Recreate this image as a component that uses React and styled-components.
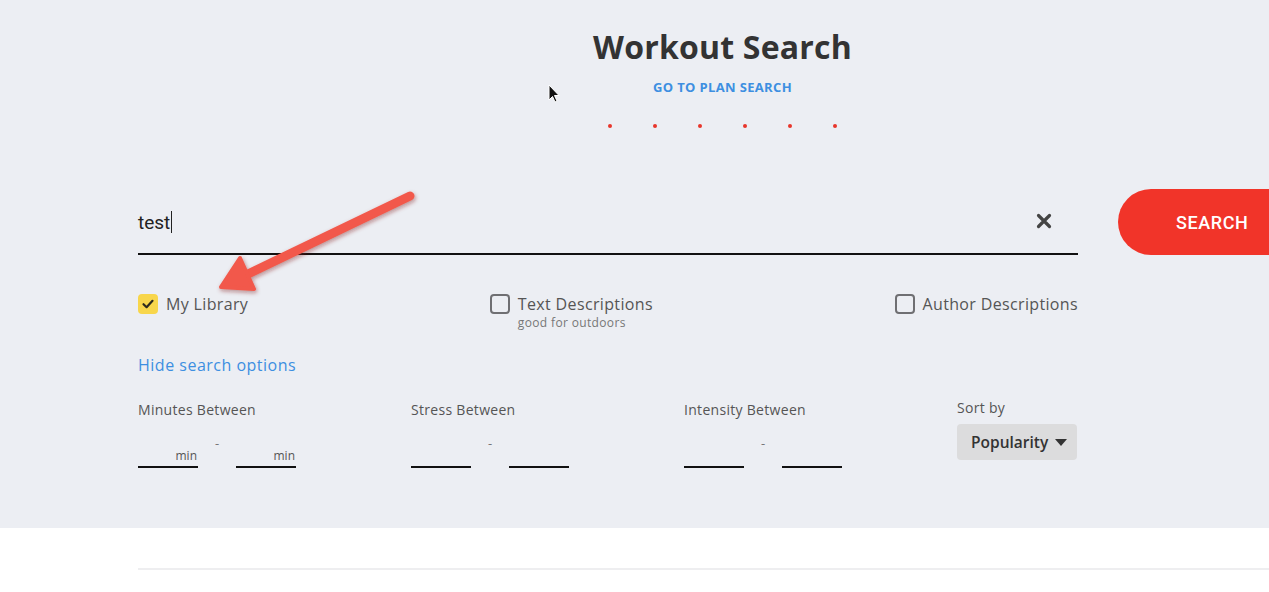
import React from 'react'
import styled, { createGlobalStyle } from 'styled-components'

const GlobalStyle = createGlobalStyle`
  html, body {
    margin: 0;
    padding: 0;
    background: #fff;
    overflow: hidden;
  }
  body {
    font-family: 'Open Sans', 'Noto Sans', sans-serif;
    color: #333;
  }
`

const Page = styled.div`
  position: relative;
  width: 1269px;
  height: 592px;
  overflow: hidden;
`

const Panel = styled.section`
  background: #eceef3;
  height: 528px;
  padding-top: 27px;
  box-sizing: border-box;
`

const Container = styled.div`
  margin-left: 138px;
  width: 1169px;
`

const Header = styled.header`
  display: flex;
  flex-direction: column;
  align-items: center;
`

const Title = styled.h1`
  margin: 0;
  font-size: 32px;
  line-height: 40px;
  font-weight: 700;
  color: #333;
  letter-spacing: 0.2px;
`

const PlanLink = styled.a`
  margin-top: 11px;
  font-size: 13px;
  line-height: 18px;
  font-weight: 700;
  color: #3d8fe1;
  letter-spacing: 0.35px;
  text-transform: uppercase;
  text-decoration: none;
`

const Dots = styled.div`
  display: flex;
  gap: 41px;
  margin-top: 28px;
  height: 4px;
`

const Dot = styled.span`
  width: 4px;
  height: 4px;
  border-radius: 50%;
  background: #e8352b;
`

const SearchRow = styled.div`
  display: flex;
  margin-top: 61px;
  height: 66px;
`

const InputWrap = styled.div`
  width: 940px;
  display: flex;
  align-items: center;
  border-bottom: 2px solid #111;
  box-sizing: border-box;
`

const QueryText = styled.span`
  flex: 1;
  font-family: Roboto, 'Liberation Sans', sans-serif;
  font-size: 19px;
  color: #222;
  display: flex;
  align-items: center;
  padding-top: 2px;
`

const Caret = styled.span`
  display: inline-block;
  width: 1px;
  height: 22px;
  background: #222;
  margin-left: 1px;
`

const ClearButton = styled.button`
  border: 0;
  background: none;
  padding: 0;
  margin-right: 26px;
  display: flex;
  cursor: pointer;
`

const SearchButton = styled.button`
  margin-left: 40px;
  width: 189px;
  border: 0;
  border-radius: 33px;
  background: #f13429;
  color: #fff;
  font-family: Roboto, 'Liberation Sans', sans-serif;
  font-size: 18px;
  font-weight: 500;
  text-align: left;
  padding-left: 58px;
  letter-spacing: 0.6px;
`

const OptionsRow = styled.div`
  width: 940px;
  display: flex;
  justify-content: space-between;
  margin-top: 39px;
`

const Option = styled.label`
  display: flex;
  align-items: flex-start;
  gap: 8px;
`

const Box = styled.span`
  width: 20px;
  height: 20px;
  box-sizing: border-box;
  border-radius: 4px;
  border: ${p => (p.checked ? '0' : '2px solid #6f6f72')};
  background: ${p => (p.checked ? '#f8d64b' : 'transparent')};
  display: flex;
  align-items: center;
  justify-content: center;
`

const OptionText = styled.span`
  display: flex;
  flex-direction: column;
`

const OptionLabel = styled.span`
  font-size: 16px;
  line-height: 20px;
  letter-spacing: 0.35px;
  color: #555;
`

const OptionHint = styled.span`
  font-size: 12px;
  line-height: 18px;
  letter-spacing: 0.35px;
  color: #777;
`

const HideLink = styled.a`
  display: block;
  margin-top: 22px;
  font-size: 16px;
  line-height: 22px;
  letter-spacing: 0.5px;
  color: #3d8fe1;
  text-decoration: none;
`

const Filters = styled.div`
  display: grid;
  grid-template-columns: 273px 273px 273px 120px;
  margin-top: 24px;
`

const Filter = styled.div`
  display: flex;
  flex-direction: column;
  margin-top: ${p => (p.raised ? '-2px' : '0')};
`

const FilterLabel = styled.span`
  font-size: 14px;
  line-height: 20px;
  letter-spacing: 0.3px;
  color: #555;
`

const Range = styled.div`
  display: flex;
  align-items: center;
  height: 48px;
`

const NumberField = styled.div`
  width: 60px;
  height: 48px;
  box-sizing: border-box;
  border-bottom: 2px solid #111;
  display: flex;
  align-items: flex-end;
  justify-content: flex-end;
  padding: 0 1px 3px 0;
  font-size: 12px;
  line-height: 14px;
  color: #555;
`

const Dash = styled.span`
  width: 38px;
  text-align: center;
  font-size: 13px;
  color: #777;
  margin-top: -2px;
`

const Select = styled.div`
  margin-top: 6px;
  height: 36px;
  width: 120px;
  box-sizing: border-box;
  border-radius: 4px;
  background: #dcdcdd;
  display: flex;
  align-items: center;
  padding-left: 14px;
  gap: 7px;
  font-size: 15.5px;
  font-weight: 600;
  color: #333;
`

const Divider = styled.hr`
  margin: 40px 0 0 138px;
  border: 0;
  height: 2px;
  background: #eeeef0;
`

const Overlay = styled.svg`
  position: absolute;
  top: 0;
  left: 0;
  pointer-events: none;
`

const Check = () => (
  <svg width="14" height="14" viewBox="0 0 14 14">
    <path d="M2.5 7.2 L5.6 10.2 L11.5 3.8" fill="none" stroke="#2d2a1e" strokeWidth="2.2" strokeLinecap="round" strokeLinejoin="round" />
  </svg>
)

const ClearIcon = () => (
  <svg width="16" height="16" viewBox="0 0 16 16">
    <path d="M2.5 2.5 L13.5 13.5 M13.5 2.5 L2.5 13.5" stroke="#444" strokeWidth="3.2" strokeLinecap="round" />
  </svg>
)

const CaretDown = () => (
  <svg width="12" height="7" viewBox="0 0 12 7">
    <path d="M0 0 H12 L6 7 Z" fill="#333" />
  </svg>
)

const ranges = [
  { label: 'Minutes Between', suffix: 'min' },
  { label: 'Stress Between', suffix: '' },
  { label: 'Intensity Between', suffix: '' },
]

export default function App() {
  return (
    <Page>
      <GlobalStyle />
      <Panel>
        <Container>
          <Header>
            <Title>Workout Search</Title>
            <PlanLink href="#">Go to plan search</PlanLink>
            <Dots>
              {[0, 1, 2, 3, 4, 5].map(i => <Dot key={i} />)}
            </Dots>
          </Header>

          <SearchRow>
            <InputWrap>
              <QueryText>
                test<Caret />
              </QueryText>
              <ClearButton aria-label="clear">
                <ClearIcon />
              </ClearButton>
            </InputWrap>
            <SearchButton>SEARCH</SearchButton>
          </SearchRow>

          <OptionsRow>
            <Option>
              <Box checked>
                <Check />
              </Box>
              <OptionText>
                <OptionLabel>My Library</OptionLabel>
              </OptionText>
            </Option>
            <Option>
              <Box />
              <OptionText>
                <OptionLabel>Text Descriptions</OptionLabel>
                <OptionHint>good for outdoors</OptionHint>
              </OptionText>
            </Option>
            <Option>
              <Box />
              <OptionText>
                <OptionLabel>Author Descriptions</OptionLabel>
              </OptionText>
            </Option>
          </OptionsRow>

          <HideLink href="#">Hide search options</HideLink>

          <Filters>
            {ranges.map(r => (
              <Filter key={r.label}>
                <FilterLabel>{r.label}</FilterLabel>
                <Range>
                  <NumberField>{r.suffix}</NumberField>
                  <Dash>-</Dash>
                  <NumberField>{r.suffix}</NumberField>
                </Range>
              </Filter>
            ))}
            <Filter raised>
              <FilterLabel>Sort by</FilterLabel>
              <Select>
                Popularity
                <CaretDown />
              </Select>
            </Filter>
          </Filters>
        </Container>
      </Panel>
      <Divider />

      <Overlay width="1269" height="592">
        <defs>
          <filter id="shadow" x="-20%" y="-20%" width="140%" height="140%">
            <feDropShadow dx="1" dy="2" stdDeviation="2" floodColor="#7a1e14" floodOpacity="0.45" />
          </filter>
        </defs>
        <g filter="url(#shadow)" fill="#f2594b" stroke="#f2594b" strokeLinecap="round" strokeLinejoin="round">
          <line x1="410" y1="196" x2="248" y2="274" strokeWidth="9" />
          <path d="M221 287 L240 258 L254 289 Z" strokeWidth="4" />
        </g>
        <path d="M549 85 L549 100 L552.5 96.5 L555 102 L557 101 L554.5 95.5 L559 95.5 Z" fill="#111" stroke="#fff" strokeWidth="1" />
      </Overlay>
    </Page>
  )
}
